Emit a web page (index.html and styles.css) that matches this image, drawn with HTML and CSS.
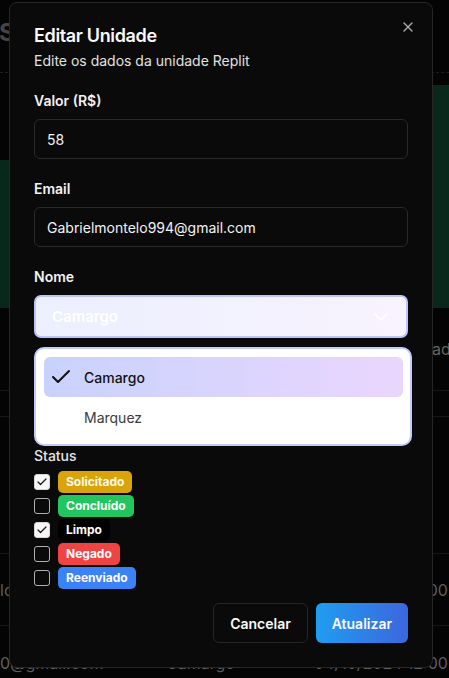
FILE: index.html
```html
<!DOCTYPE html>
<html lang="pt-BR">
<head>
<meta charset="utf-8">
<title>Editar Unidade</title>
<link rel="stylesheet" href="styles.css">
</head>
<body>
<div class="page" aria-hidden="true">
  <header class="page-head"><h1 class="page-title">Serviços</h1></header>
  <section class="stats">
    <div class="stat stat-left"></div>
    <div class="stat stat-right"></div>
  </section>
  <div class="table">
    <div class="row row-head"><span class="head-cell">Unidade</span></div>
    <div class="row row-a"></div>
    <div class="row row-b"></div>
    <div class="row row-c"><span class="cell">lo994@gmail.com</span><span class="cell">Camargo</span><span class="cell">04/10/2024 12:00</span></div>
    <div class="row row-d"><span class="cell">0@gmail.com</span><span class="cell">Camargo</span><span class="cell">04/10/2024 12:00</span></div>
  </div>
</div>

<div class="dialog" role="dialog" aria-labelledby="dlg-title">
  <button class="close" type="button" aria-label="Fechar">
    <svg width="16" height="16" viewBox="0 0 24 24" fill="none" stroke="currentColor" stroke-width="2" stroke-linecap="round" stroke-linejoin="round"><path d="M18 6 6 18"/><path d="m6 6 12 12"/></svg>
  </button>
  <div class="dialog-header">
    <h2 class="dialog-title" id="dlg-title">Editar Unidade</h2>
    <p class="dialog-desc">Edite os dados da unidade Replit</p>
  </div>
  <form class="form">
    <div class="field">
      <label class="label" for="valor">Valor (R$)</label>
      <input class="input" id="valor" type="text" value="58">
    </div>
    <div class="field">
      <label class="label" for="email">Email</label>
      <input class="input" id="email" type="text" value="Gabrielmontelo994@gmail.com">
    </div>
    <div class="field">
      <span class="label">Nome</span>
      <div class="select">
        <span class="select-value">Camargo</span>
        <svg class="chev" width="24" height="24" viewBox="0 0 24 24" fill="none" stroke="currentColor" stroke-width="1.6" stroke-linecap="round" stroke-linejoin="round"><path d="m6 9 6 6 6-6"/></svg>
      </div>
      <div class="listbox" role="listbox">
        <div class="option selected" role="option">
          <svg class="opt-check" width="24" height="24" viewBox="0 0 24 24" fill="none" stroke="currentColor" stroke-width="2" stroke-linecap="round" stroke-linejoin="round"><path d="M20 6 9 17l-5-5"/></svg>
          <span>Camargo</span>
        </div>
        <div class="option" role="option">
          <span class="opt-space"></span>
          <span>Marquez</span>
        </div>
      </div>
    </div>
    <div class="field field-under" aria-hidden="true">
      <span class="label">Data</span>
      <div class="input"></div>
    </div>
    <div class="status">
      <span class="status-label">Status</span>
      <div class="checks">
        <div class="check-row">
          <span class="cb checked"><svg width="12" height="12" viewBox="0 0 24 24" fill="none" stroke="currentColor" stroke-width="2.5" stroke-linecap="round" stroke-linejoin="round"><path d="M20 6 9 17l-5-5"/></svg></span>
          <span class="badge b-yellow">Solicitado</span>
        </div>
        <div class="check-row">
          <span class="cb"></span>
          <span class="badge b-green">Concluído</span>
        </div>
        <div class="check-row">
          <span class="cb checked"><svg width="12" height="12" viewBox="0 0 24 24" fill="none" stroke="currentColor" stroke-width="2.5" stroke-linecap="round" stroke-linejoin="round"><path d="M20 6 9 17l-5-5"/></svg></span>
          <span class="badge b-black">Limpo</span>
        </div>
        <div class="check-row">
          <span class="cb"></span>
          <span class="badge b-red">Negado</span>
        </div>
        <div class="check-row">
          <span class="cb"></span>
          <span class="badge b-blue">Reenviado</span>
        </div>
      </div>
    </div>
  </form>
  <div class="footer">
    <button class="btn btn-outline" type="button">Cancelar</button>
    <button class="btn btn-primary" type="button">Atualizar</button>
  </div>
</div>
</body>
</html>
```

FILE: styles.css
```css
html, body {
  margin: 0;
  padding: 0;
}
body {
  width: 449px;
  height: 678px;
  overflow: hidden;
  position: relative;
  background: #040404;
  font-family: Inter, "Noto Sans", sans-serif;
}

/* background page (dimmed) */
.page {
  height: 678px;
  overflow: hidden;
  color: #5a5a5a;
}
.page-head {
  height: 72px;
  border-bottom: 1px dashed #1e1e1e;
  display: flex;
  align-items: center;
  padding-bottom: 6px;
  box-sizing: border-box;
  height: 73px;
}
.page-title {
  margin: 0 0 0 -1px;
  font-size: 24px;
  line-height: 1;
  font-weight: 700;
  color: #454545;
}
.stats {
  display: flex;
  align-items: flex-end;
  gap: 16px;
  height: 235px;
}
.stat {
  background: #07281b;
}
.stat-left {
  width: 200px;
  height: 148px;
}
.stat-right {
  flex: 1;
  height: 223px;
}
.row {
  display: grid;
  grid-template-columns: 166px 148px 1fr;
  align-items: center;
  border-bottom: 1px solid #161616;
  font-size: 16px;
  white-space: nowrap;
}
.row-head {
  display: flex;
  height: 82px;
  padding-left: 397px;
}
.head-cell {
  color: #666;
}
.row-a { height: 25px; }
.row-b { height: 136px; }
.row-c { height: 71px; }
.row-d { height: 74px; border-bottom: none; }
.cell {
  color: #5e5e5e;
}

/* dialog */
.dialog {
  position: absolute;
  left: 9px;
  top: 2px;
  width: 424px;
  box-sizing: border-box;
  background: #0a0a0a;
  border: 1px solid #272727;
  border-radius: 8px;
  padding: 24px;
  display: flex;
  flex-direction: column;
  color: #fafafa;
}
.close {
  position: absolute;
  top: 16px;
  right: 16px;
  width: 16px;
  height: 16px;
  padding: 0;
  border: 0;
  background: none;
  color: #a8a8a8;
  display: flex;
}
.dialog-header {
  display: flex;
  flex-direction: column;
  gap: 6px;
  margin-bottom: 20px;
}
.dialog-title {
  margin: 0;
  font-size: 18px;
  line-height: 18px;
  font-weight: 600;
  letter-spacing: -0.02em;
  color: #fafafa;
}
.dialog-desc {
  margin: 0;
  font-size: 14px;
  line-height: 20px;
  color: #e2e2e2;
}
.form {
  display: flex;
  flex-direction: column;
  gap: 20px;
  margin: 0;
}
.field {
  display: flex;
  flex-direction: column;
  gap: 8px;
  position: relative;
}
.field-under {
  visibility: hidden;
}
.label {
  font-size: 14px;
  line-height: 20px;
  font-weight: 600;
  color: #f2f2f2;
}
.input {
  height: 40px;
  box-sizing: border-box;
  width: 100%;
  border: 1px solid #2a2a2a;
  border-radius: 6px;
  background: #0a0a0a;
  padding: 0 12px;
  font-family: inherit;
  font-size: 14px;
  color: #f3f3f3;
  outline: none;
}
.select {
  height: 43px;
  box-sizing: border-box;
  border: 2px solid #bcc5f8;
  border-radius: 7px;
  background: linear-gradient(90deg, #eceffe, #f8f3fe);
  display: flex;
  align-items: center;
  justify-content: space-between;
  padding: 0 13px 0 16px;
  color: #ffffff;
  font-size: 15px;
  font-weight: 600;
}
.chev {
  color: #ffffff;
}
.listbox {
  position: absolute;
  top: 80px;
  left: 0;
  width: 378px;
  box-sizing: border-box;
  background: #ffffff;
  border: 2px solid #c3cbf9;
  border-radius: 10px;
  padding: 8px 7px 7px 8px;
  z-index: 2;
}
.option {
  height: 40px;
  display: flex;
  align-items: center;
  gap: 11px;
  padding-left: 5px;
  border-radius: 6px;
  font-size: 14px;
  color: #3a3a3a;
}
.option.selected {
  background: linear-gradient(90deg, #c8d2fd, #ead6fd);
  color: #111111;
  font-weight: 500;
}
.opt-check {
  color: #111;
  flex: none;
}
.opt-space {
  width: 24px;
  flex: none;
}
.status {
  display: flex;
  flex-direction: column;
  gap: 5px;
}
.status-label {
  font-size: 14px;
  line-height: 20px;
  font-weight: 500;
  color: #e6e6e6;
}
.checks {
  display: flex;
  flex-direction: column;
  gap: 2px;
}
.check-row {
  display: flex;
  align-items: center;
  gap: 8px;
  height: 22px;
}
.cb {
  width: 16px;
  height: 16px;
  box-sizing: border-box;
  border: 1px solid #b0b0b0;
  border-radius: 3px;
  display: flex;
  align-items: center;
  justify-content: center;
  color: #1a1a1a;
}
.cb.checked {
  background: #f7f7f7;
  border-color: #d6d6d6;
}
.badge {
  height: 22px;
  line-height: 22px;
  padding: 0 8px;
  border-radius: 5px;
  font-size: 12px;
  font-weight: 700;
  color: #ffffff;
}
.b-yellow { background: #d9a40a; color: #fff8e6; }
.b-green { background: #22c55e; }
.b-black { background: #000000; }
.b-red { background: #ef4444; }
.b-blue { background: #3b82f6; }
.footer {
  display: flex;
  justify-content: flex-end;
  gap: 8px;
  margin-top: 14px;
}
.btn {
  height: 40px;
  padding: 0 16px;
  border-radius: 6px;
  font-family: inherit;
  font-size: 14px;
  font-weight: 600;
  color: #fafafa;
  cursor: pointer;
}
.btn-outline {
  border: 1px solid #262626;
  background: #0a0a0a;
}
.btn-primary {
  border: 0;
  background: linear-gradient(90deg, #1f9df0, #3d66de);
}
```
